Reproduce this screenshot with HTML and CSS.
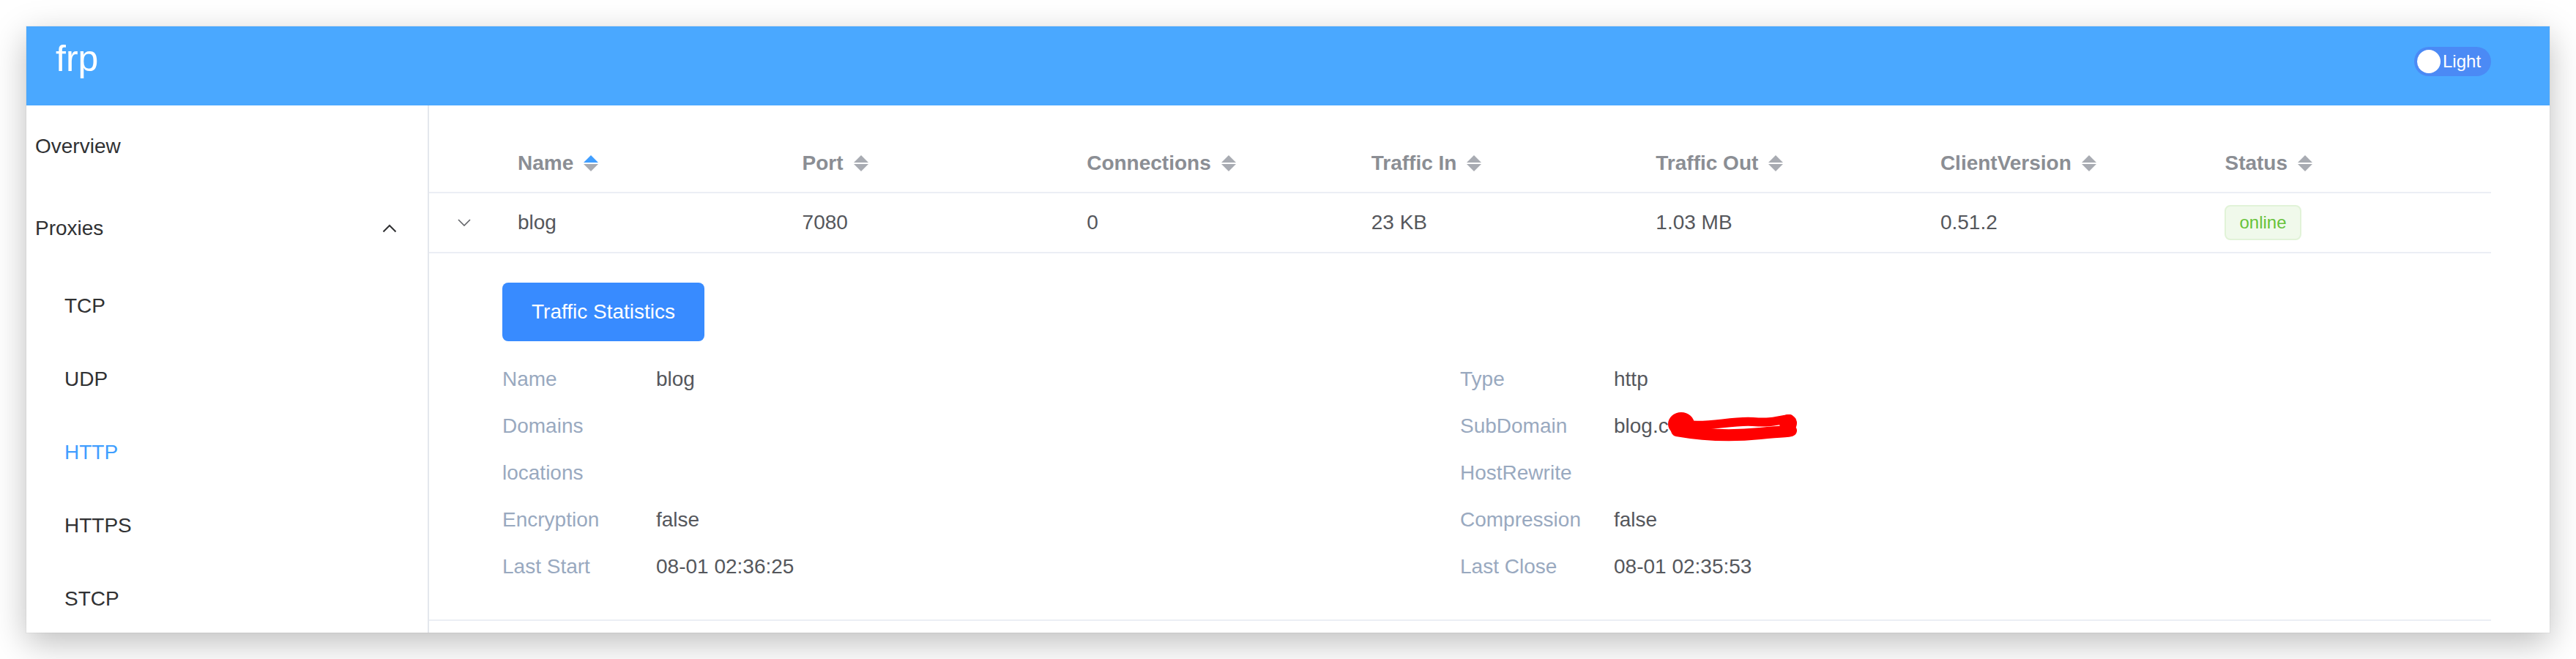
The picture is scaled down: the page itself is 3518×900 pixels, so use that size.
FILE: index.html
```html
<!DOCTYPE html>
<html lang="en">
<head>
<meta charset="utf-8">
<title>frp</title>
<link rel="stylesheet" href="styles.css">
</head>
<body>
<div class="window">
  <header class="topbar">
    <span class="brand">frp</span>
    <div class="theme-switch"><span class="knob"></span><span class="switch-text">Light</span></div>
  </header>
  <div class="layout">
    <nav class="sidebar">
      <div class="menu-item">Overview</div>
      <div class="menu-item submenu-title">
        <span>Proxies</span>
        <svg class="chev-up" width="20" height="12" viewBox="0 0 20 12"><polyline points="1.5,10.5 10,2 18.5,10.5" fill="none" stroke="#303133" stroke-width="2"/></svg>
      </div>
      <div class="sub-item">TCP</div>
      <div class="sub-item">UDP</div>
      <div class="sub-item active">HTTP</div>
      <div class="sub-item">HTTPS</div>
      <div class="sub-item">STCP</div>
    </nav>
    <main class="content">
      <div class="table">
        <div class="tr thead">
          <div class="col-expand"></div>
          <div class="col th">Name <svg class="sort" width="20" height="22" viewBox="0 0 20 22"><polygon points="10,0 20,10 0,10" fill="#409eff"/><polygon points="0,12 20,12 10,22" fill="#a8abb2"/></svg></div>
          <div class="col th">Port <svg class="sort" width="20" height="22" viewBox="0 0 20 22"><polygon points="10,0 20,10 0,10" fill="#a8abb2"/><polygon points="0,12 20,12 10,22" fill="#a8abb2"/></svg></div>
          <div class="col th">Connections <svg class="sort" width="20" height="22" viewBox="0 0 20 22"><polygon points="10,0 20,10 0,10" fill="#a8abb2"/><polygon points="0,12 20,12 10,22" fill="#a8abb2"/></svg></div>
          <div class="col th">Traffic In <svg class="sort" width="20" height="22" viewBox="0 0 20 22"><polygon points="10,0 20,10 0,10" fill="#a8abb2"/><polygon points="0,12 20,12 10,22" fill="#a8abb2"/></svg></div>
          <div class="col th">Traffic Out <svg class="sort" width="20" height="22" viewBox="0 0 20 22"><polygon points="10,0 20,10 0,10" fill="#a8abb2"/><polygon points="0,12 20,12 10,22" fill="#a8abb2"/></svg></div>
          <div class="col th">ClientVersion <svg class="sort" width="20" height="22" viewBox="0 0 20 22"><polygon points="10,0 20,10 0,10" fill="#a8abb2"/><polygon points="0,12 20,12 10,22" fill="#a8abb2"/></svg></div>
          <div class="col th">Status <svg class="sort" width="20" height="22" viewBox="0 0 20 22"><polygon points="10,0 20,10 0,10" fill="#a8abb2"/><polygon points="0,12 20,12 10,22" fill="#a8abb2"/></svg></div>
        </div>
        <div class="tr trow">
          <div class="col-expand"><svg width="18" height="10" viewBox="0 0 18 10"><polyline points="1,1 9,9 17,1" fill="none" stroke="#606266" stroke-width="1.6"/></svg></div>
          <div class="col td">blog</div>
          <div class="col td">7080</div>
          <div class="col td">0</div>
          <div class="col td">23 KB</div>
          <div class="col td">1.03 MB</div>
          <div class="col td">0.51.2</div>
          <div class="col td"><span class="tag">online</span></div>
        </div>
        <div class="expanded">
          <button class="btn-primary" type="button">Traffic Statistics</button>
          <div class="detail-grid">
            <div class="detail"><span class="label">Name</span><span class="value">blog</span></div>
            <div class="detail"><span class="label">Type</span><span class="value">http</span></div>
            <div class="detail"><span class="label">Domains</span><span class="value"></span></div>
            <div class="detail"><span class="label">SubDomain</span><span class="value redacted">blog.c<svg class="scribble" width="190" height="46" viewBox="0 0 190 46"><ellipse cx="22" cy="21" rx="18" ry="16" fill="#ff0000"/><path d="M16,30 C50,36 90,38 130,34 S165,32 172,30" fill="none" stroke="#ff0000" stroke-width="16" stroke-linecap="round" stroke-linejoin="round"/><path d="M30,22 C60,26 90,16 120,18 S150,16 170,14" fill="none" stroke="#ff0000" stroke-width="12" stroke-linecap="round"/><circle cx="168" cy="20" r="12" fill="#ff0000"/></svg></span></div>
            <div class="detail"><span class="label">locations</span><span class="value"></span></div>
            <div class="detail"><span class="label">HostRewrite</span><span class="value"></span></div>
            <div class="detail"><span class="label">Encryption</span><span class="value">false</span></div>
            <div class="detail"><span class="label">Compression</span><span class="value">false</span></div>
            <div class="detail"><span class="label">Last Start</span><span class="value">08-01 02:36:25</span></div>
            <div class="detail"><span class="label">Last Close</span><span class="value">08-01 02:35:53</span></div>
          </div>
        </div>
      </div>
    </main>
  </div>
</div>
</body>
</html>
```

FILE: styles.css
```css
* { box-sizing: border-box; }
html, body { margin: 0; padding: 0; background: #ffffff; }
body {
  width: 3518px;
  height: 900px;
  overflow: hidden;
  font-family: "Liberation Sans", Arial, sans-serif;
}
.window {
  margin: 36px;
  width: 3446px;
  height: 828px;
  background: #fff;
  display: flex;
  flex-direction: column;
  overflow: hidden;
  box-shadow: 0 14px 44px rgba(0,0,0,0.26), 0 0 0 1px rgba(0,0,0,0.04);
}
.topbar {
  flex: none;
  height: 108px;
  background: #4aa8ff;
  display: flex;
  align-items: flex-start;
  padding: 0 80px 0 40px;
}
.brand {
  color: #fff;
  font-size: 50px;
  line-height: 58px;
  margin-top: 15px;
}
.theme-switch {
  margin-left: auto;
  margin-top: 28px;
  width: 105px;
  height: 40px;
  border-radius: 20px;
  background: #4b8af5;
  display: flex;
  align-items: center;
  padding: 0 4px;
  gap: 3px;
}
.knob { width: 32px; height: 32px; border-radius: 50%; background: #fff; flex: none; }
.switch-text { color: #fff; font-size: 24px; line-height: 40px; }

.layout { flex: 1; display: flex; min-height: 0; }
.sidebar {
  flex: none;
  width: 550px;
  border-right: 2px solid #e4e7ed;
  overflow: hidden;
}
.menu-item {
  height: 112px;
  line-height: 112px;
  padding-left: 12px;
  font-size: 28px;
  color: #303133;
}
.submenu-title {
  display: flex;
  align-items: center;
  justify-content: space-between;
  padding-right: 42px;
}
.chev-up { display: block; }
.sub-item {
  height: 100px;
  line-height: 100px;
  padding-left: 52px;
  font-size: 28px;
  color: #303133;
}
.sub-item.active { color: #409eff; }

.content { flex: 1; min-width: 0; padding: 40px 80px 0 0; }
.tr { display: flex; align-items: center; border-bottom: 2px solid #ebeef5; }
.thead { height: 80px; }
.trow { height: 82px; }
.col-expand { flex: none; width: 96px; display: flex; justify-content: center; align-items: center; }
.col { flex: 1 1 0; min-width: 0; padding-left: 25px; font-size: 28px; white-space: nowrap; }
.th { display: flex; align-items: center; gap: 14px; font-weight: bold; color: #8b8e94; }
.sort { display: block; flex: none; }
.td { color: #55575c; }
.tag {
  display: inline-block;
  height: 48px;
  line-height: 44px;
  padding: 0 18px;
  font-size: 24px;
  color: #67c23a;
  background: #f0f9eb;
  border: 2px solid #e1f3d8;
  border-radius: 8px;
}

.expanded { padding: 40px 100px; border-bottom: 2px solid #ebeef5; }
.btn-primary {
  display: block;
  height: 80px;
  padding: 0 40px;
  border: none;
  border-radius: 8px;
  background: #388bff;
  color: #fff;
  font-family: "Liberation Sans", Arial, sans-serif;
  font-size: 28px;
  margin-bottom: 20px;
}
.detail-grid { display: grid; grid-template-columns: 1fr 1fr; grid-auto-rows: 64px; }
.detail { display: flex; align-items: center; font-size: 28px; }
.label { width: 210px; flex: none; color: #99a9bf; }
.value { color: #55575c; }
.redacted { position: relative; }
.scribble { position: absolute; left: 70px; top: -8px; }
```
